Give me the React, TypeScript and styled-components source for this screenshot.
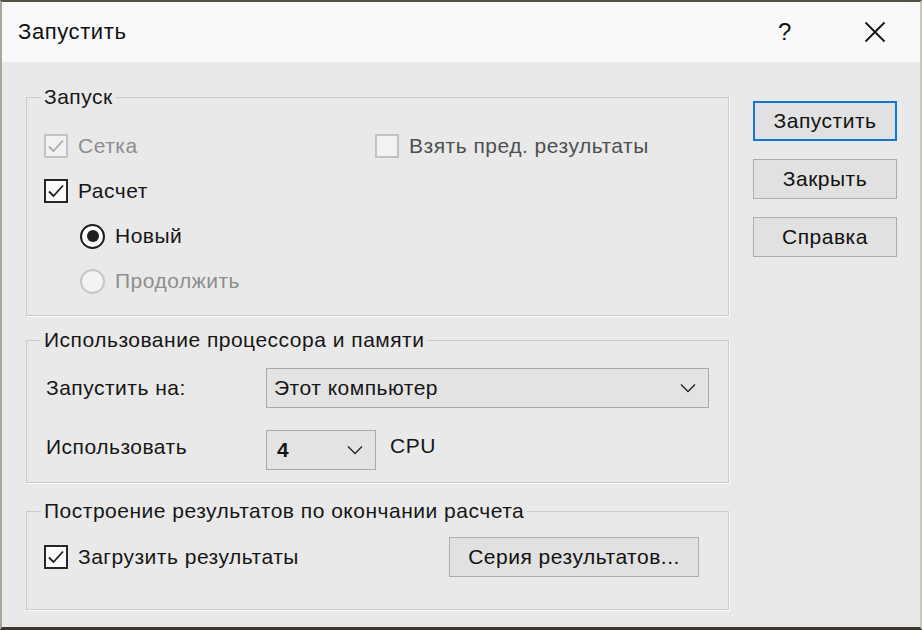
import React from "react";
import styled, { createGlobalStyle } from "styled-components";

const GlobalStyle = createGlobalStyle`
  html, body {
    margin: 0;
    padding: 0;
    background: #e9e9e9;
  }
  body {
    font-family: "Liberation Sans", Arial, sans-serif;
    letter-spacing: 0.5px;
    color: #1b1b1b;
  }
`;

const Window = styled.div`
  width: 922px;
  height: 630px;
  box-sizing: border-box;
  display: flex;
  flex-direction: column;
  background: #e9e9e9;
  border-top: 2px solid #55533f;
  border-bottom: 3px solid #3b392d;
  border-left: 2px solid #a9a798;
  border-right: 2px solid #c9c7b8;
  overflow: hidden;
`;

const TitleBar = styled.div`
  height: 60px;
  flex: none;
  display: flex;
  align-items: center;
  background: #f9f9f9;
  padding-left: 16px;
`;

const Title = styled.div`
  flex: 1;
  font-size: 22px;
  letter-spacing: 0.6px;
  color: #111;
`;

const TitleButton = styled.div`
  width: 90px;
  height: 60px;
  display: flex;
  align-items: center;
  justify-content: center;
  font-size: 24px;
  color: #111;
`;

const Body = styled.div`
  flex: 1;
  display: flex;
  padding-left: 24px;
`;

const LeftColumn = styled.div`
  width: 703px;
  padding-top: 23px;
  display: flex;
  flex-direction: column;
`;

const RightColumn = styled.div`
  width: 144px;
  margin-left: 24px;
  padding-top: 39px;
  display: flex;
  flex-direction: column;
  gap: 18px;
`;

const Group = styled.fieldset<{ $pad: string; $after?: number }>`
  margin: 0 0 ${(p) => p.$after ?? 0}px 0;
  min-width: 0;
  border: 1px solid #cbcbcb;
  box-shadow: 1px 1px 0 #fbfbfb;
  padding: ${(p) => p.$pad};
`;

const Legend = styled.legend`
  font-size: 21px;
  line-height: 24px;
  padding: 0 3px;
  margin-left: -3px;
  color: #161616;
`;

const Stack = styled.div<{ $gap: number }>`
  display: flex;
  flex-direction: column;
  gap: ${(p) => p.$gap}px;
`;

const Row = styled.div`
  display: flex;
  align-items: center;
`;

const Cell = styled.div<{ $width?: number; $indent?: number }>`
  width: ${(p) => (p.$width ? `${p.$width}px` : "auto")};
  margin-left: ${(p) => p.$indent ?? 0}px;
`;

const Item = styled.label<{ $tone?: "normal" | "dim" | "faint" }>`
  display: flex;
  align-items: center;
  gap: 10px;
  height: 30px;
  font-size: 21px;
  color: ${(p) =>
    p.$tone === "faint" ? "#8e8e8e" : p.$tone === "dim" ? "#4f4f4f" : "#161616"};
`;

const Box = styled.span<{ $disabled?: boolean }>`
  width: 24px;
  height: 24px;
  box-sizing: border-box;
  flex: none;
  display: flex;
  align-items: center;
  justify-content: center;
  border: 2px solid ${(p) => (p.$disabled ? "#c2c2c2" : "#262626")};
  background: ${(p) => (p.$disabled ? "#f2f2f2" : "#fbfbfb")};
`;

const Circle = styled.span<{ $disabled?: boolean }>`
  width: 25px;
  height: 25px;
  box-sizing: border-box;
  flex: none;
  border-radius: 50%;
  display: flex;
  align-items: center;
  justify-content: center;
  border: 2px solid ${(p) => (p.$disabled ? "#c6c6c6" : "#1e1e1e")};
  background: ${(p) => (p.$disabled ? "#f3f3f3" : "#fbfbfb")};
`;

const Dot = styled.span`
  width: 12px;
  height: 12px;
  border-radius: 50%;
  background: #1e1e1e;
`;

const FormRow = styled.div`
  display: flex;
  align-items: center;
  height: 40px;
`;

const FieldLabel = styled.div<{ $lift?: number }>`
  width: 220px;
  padding-left: 2px;
  margin-bottom: ${(p) => p.$lift ?? 0}px;
  font-size: 21px;
  color: #161616;
`;

const Combo = styled.div<{ $width: number }>`
  width: ${(p) => p.$width}px;
  height: 40px;
  box-sizing: border-box;
  display: flex;
  align-items: center;
  justify-content: space-between;
  padding: 0 12px 0 7px;
  border: 1px solid #a9a9a9;
  background: #e3e3e3;
  font-size: 21px;
  color: #161616;
`;

const ComboValue = styled.span<{ $bold?: boolean }>`
  font-weight: ${(p) => (p.$bold ? 700 : 400)};
  padding-left: ${(p) => (p.$bold ? 3 : 0)}px;
`;

const Unit = styled.span`
  margin-left: 14px;
  margin-bottom: 8px;
  font-size: 21px;
  color: #161616;
`;

const PushButton = styled.button<{ $primary?: boolean; $width?: number }>`
  width: ${(p) => (p.$width ? `${p.$width}px` : "100%")};
  height: 40px;
  box-sizing: border-box;
  font-family: "Liberation Sans", Arial, sans-serif;
  font-size: 21px;
  letter-spacing: 0.5px;
  color: #111;
  background: #e1e1e1;
  border: ${(p) => (p.$primary ? "2px solid #0f78d2" : "1px solid #adadad")};
  padding: 0;
  margin: 0;
`;

const ResultsRow = styled.div`
  display: flex;
  align-items: center;
  justify-content: space-between;
  height: 40px;
  padding-right: 12px;
`;

const Check = ({ color }: { color: string }) => (
  <svg width="18" height="16" viewBox="0 0 18 16">
    <polyline
      points="2,8.5 6.5,13 16,2.5"
      fill="none"
      stroke={color}
      strokeWidth="1.8"
    />
  </svg>
);

const Chevron = () => (
  <svg width="16" height="10" viewBox="0 0 16 10">
    <polyline points="1,1.5 8,8.5 15,1.5" fill="none" stroke="#2a2a2a" strokeWidth="1.5" />
  </svg>
);

const CheckBox = ({
  label,
  checked,
  disabled,
  tone,
}: {
  label: string;
  checked?: boolean;
  disabled?: boolean;
  tone?: "normal" | "dim" | "faint";
}) => (
  <Item $tone={tone}>
    <Box $disabled={disabled}>
      {checked && <Check color={disabled ? "#a9a9a9" : "#1e1e1e"} />}
    </Box>
    {label}
  </Item>
);

const Radio = ({
  label,
  selected,
  disabled,
}: {
  label: string;
  selected?: boolean;
  disabled?: boolean;
}) => (
  <Item $tone={disabled ? "faint" : "normal"}>
    <Circle $disabled={disabled}>{selected && <Dot />}</Circle>
    {label}
  </Item>
);

export default function App() {
  return (
    <>
      <GlobalStyle />
      <Window>
        <TitleBar>
          <Title>Запустить</Title>
          <TitleButton>?</TitleButton>
          <TitleButton>
            <svg width="22" height="22" viewBox="0 0 22 22">
              <path d="M1.5 1.5 L20.5 20.5 M20.5 1.5 L1.5 20.5" stroke="#111" strokeWidth="1.8" />
            </svg>
          </TitleButton>
        </TitleBar>
        <Body>
          <LeftColumn>
            <Group $pad="22px 17px 19px" $after={12}>
              <Legend>Запуск</Legend>
              <Stack $gap={15}>
                <Row>
                  <Cell $width={331}>
                    <CheckBox label="Сетка" checked disabled tone="faint" />
                  </Cell>
                  <Cell>
                    <CheckBox label="Взять пред. результаты" disabled tone="dim" />
                  </Cell>
                </Row>
                <CheckBox label="Расчет" checked />
                <Cell $indent={36}>
                  <Radio label="Новый" selected />
                </Cell>
                <Cell $indent={36}>
                  <Radio label="Продолжить" disabled />
                </Cell>
              </Stack>
            </Group>

            <Group $pad="16px 17px 12px" $after={16}>
              <Legend>Использование процессора и памяти</Legend>
              <Stack $gap={22}>
                <FormRow>
                  <FieldLabel>Запустить на:</FieldLabel>
                  <Combo $width={443}>
                    <ComboValue>Этот компьютер</ComboValue>
                    <Chevron />
                  </Combo>
                </FormRow>
                <FormRow>
                  <FieldLabel $lift={6}>Использовать</FieldLabel>
                  <Combo $width={110}>
                    <ComboValue $bold>4</ComboValue>
                    <Chevron />
                  </Combo>
                  <Unit>CPU</Unit>
                </FormRow>
              </Stack>
            </Group>

            <Group $pad="14px 17px 32px">
              <Legend>Построение результатов по окончании расчета</Legend>
              <ResultsRow>
                <CheckBox label="Загрузить результаты" checked />
                <PushButton $width={250}>Серия результатов...</PushButton>
              </ResultsRow>
            </Group>
          </LeftColumn>

          <RightColumn>
            <PushButton $primary>Запустить</PushButton>
            <PushButton>Закрыть</PushButton>
            <PushButton>Справка</PushButton>
          </RightColumn>
        </Body>
      </Window>
    </>
  );
}
